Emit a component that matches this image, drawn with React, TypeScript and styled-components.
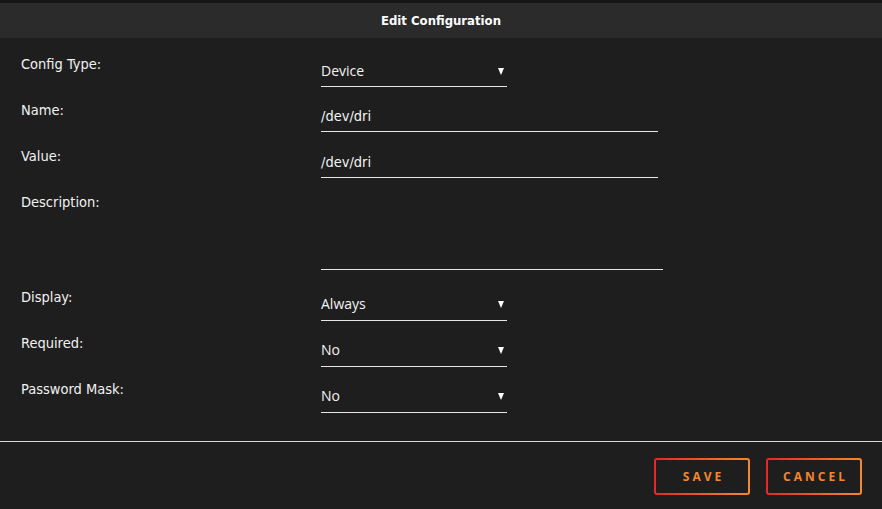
import React from "react";
import styled, { createGlobalStyle } from "styled-components";

const GlobalStyle = createGlobalStyle`
  html, body {
    margin: 0;
    padding: 0;
    background: #1e1e1e;
  }
  * {
    box-sizing: border-box;
  }
`;

const Dialog = styled.div`
  width: 882px;
  height: 509px;
  background: #1e1e1e;
  border-top: 3px solid #161616;
  display: flex;
  flex-direction: column;
  font-family: "Open Sans", "Noto Sans", sans-serif;
  color: #f2f2f2;
`;

const Header = styled.div`
  height: 35px;
  background: #2b2b2b;
  display: flex;
  align-items: center;
  justify-content: center;
  font-family: "DejaVu Sans Condensed", "DejaVu Sans", sans-serif;
  font-weight: bold;
  font-size: 13px;
  color: #ffffff;
`;

const Form = styled.div`
  padding: 19px 0 13px 21px;
  display: flex;
  flex-direction: column;
  border-bottom: 1px solid #d8d8d8;
`;

const Row = styled.div<{ $height: number }>`
  display: grid;
  grid-template-columns: 300px 1fr;
  height: ${(p) => p.$height}px;
`;

const Label = styled.div`
  font-family: "DejaVu Sans Condensed", "DejaVu Sans", sans-serif;
  font-size: 14.5px;
  line-height: 15px;
  color: #f2f2f2;
`;

const Field = styled.div<{ $width: number; $height?: number }>`
  width: ${(p) => p.$width}px;
  height: ${(p) => p.$height ?? 31}px;
  border-bottom: 1px solid #e6e6e6;
  display: flex;
  align-items: flex-start;
  justify-content: space-between;
  padding-top: 6px;
  font-size: 14px;
  line-height: 16px;
  color: #f4f4f4;
`;

const TextField = styled(Field)`
  font-family: "DejaVu Sans Condensed", "DejaVu Sans", sans-serif;
  font-size: 14.5px;
  padding-top: 5px;
`;

const Arrow = styled.span`
  width: 0;
  height: 0;
  margin: 5px 3px 0 0;
  border-left: 3px solid transparent;
  border-right: 3px solid transparent;
  border-top: 7px solid #ffffff;
`;

const Footer = styled.div`
  display: flex;
  justify-content: flex-end;
  gap: 16px;
  padding: 16px 20px 0 0;
`;

const Button = styled.button`
  width: 96px;
  height: 37px;
  border: 2px solid transparent;
  border-radius: 3px;
  background: linear-gradient(#1e1e1e, #1e1e1e) padding-box,
    linear-gradient(90deg, #e8262a, #f6892e) border-box;
  color: #f3862e;
  font-family: "Open Sans", "Noto Sans", sans-serif;
  font-weight: 700;
  font-size: 12px;
  letter-spacing: 3px;
  padding: 0 0 0 3px;
  cursor: pointer;
`;

const Select = ({ value, height }: { value: string; height?: number }) => (
  <Field $width={186} $height={height}>
    <span>{value}</span>
    <Arrow />
  </Field>
);

const App = () => {
  return (
    <>
      <GlobalStyle />
      <Dialog>
        <Header>Edit Configuration</Header>
        <Form>
          <Row $height={46}>
            <Label>Config Type:</Label>
            <Select value="Device" height={30} />
          </Row>
          <Row $height={46}>
            <Label>Name:</Label>
            <TextField $width={337} $height={29}>/dev/dri</TextField>
          </Row>
          <Row $height={46}>
            <Label>Value:</Label>
            <TextField $width={337} $height={29}>/dev/dri</TextField>
          </Row>
          <Row $height={95}>
            <Label>Description:</Label>
            <Field $width={342} $height={75} />
          </Row>
          <Row $height={46}>
            <Label>Display:</Label>
            <Select value="Always" />
          </Row>
          <Row $height={46}>
            <Label>Required:</Label>
            <Select value="No" />
          </Row>
          <Row $height={46}>
            <Label>Password Mask:</Label>
            <Select value="No" />
          </Row>
        </Form>
        <Footer>
          <Button>SAVE</Button>
          <Button>CANCEL</Button>
        </Footer>
      </Dialog>
    </>
  );
};

export default App;
